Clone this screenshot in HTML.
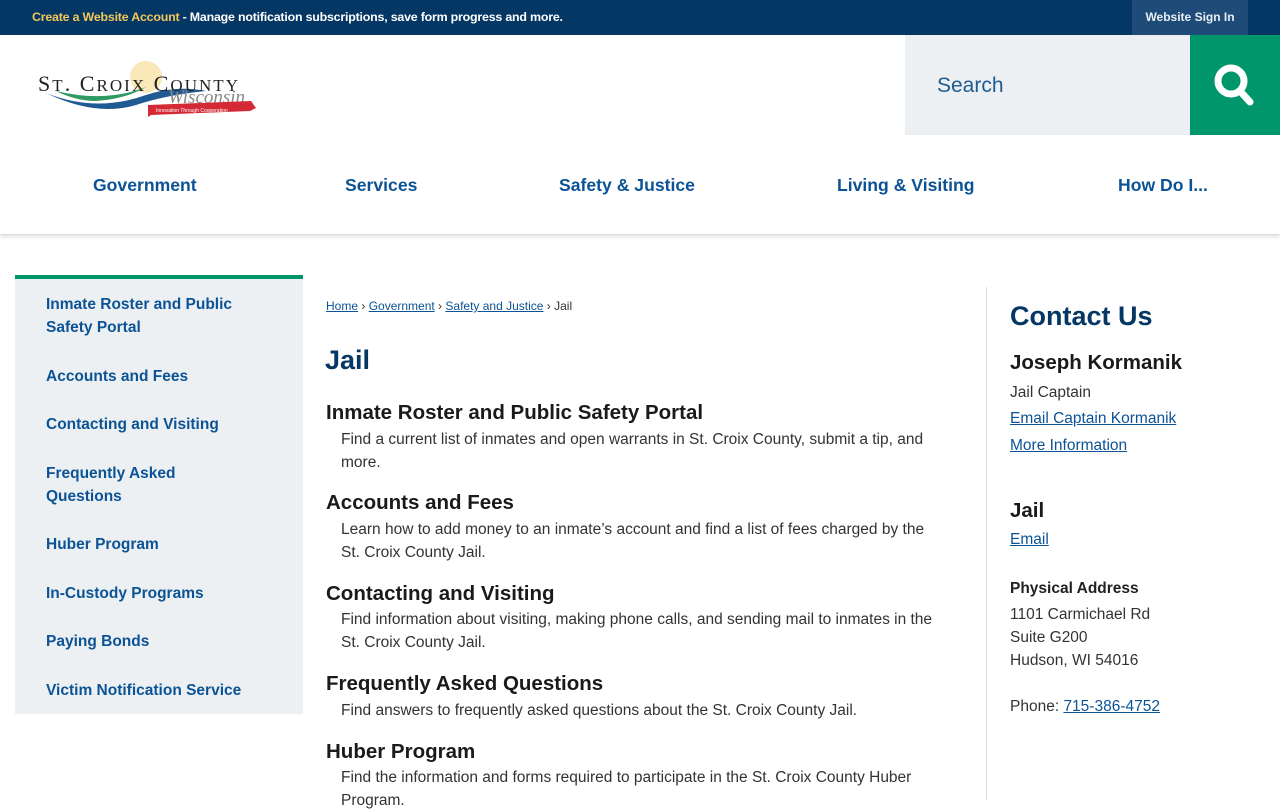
<!DOCTYPE html>
<html><head><meta charset="utf-8"><style>
*{box-sizing:border-box;margin:0;padding:0}
body{width:1280px;height:800px;overflow:hidden;font-family:"Liberation Sans",sans-serif;background:#fff;color:#222;position:relative}
.top{position:absolute;left:0;top:0;width:1280px;height:35px;background:#053764}
.top .msg{position:absolute;left:32px;top:10px;font-size:12.4px;color:#fff;font-weight:bold;letter-spacing:-0.2px}
.top .msg b{color:#f2c75c}
.top .sign{position:absolute;left:1132px;top:0;width:116px;height:35px;background:#1f4b78;color:#e8eef5;font-size:12px;font-weight:bold;text-align:center;line-height:35px}
.search{position:absolute;left:905px;top:35px;width:285px;height:100px;background:#ecf0f3}
.search span{position:absolute;left:32px;top:39px;font-size:21px;color:#1f5a92}
.sbtn{position:absolute;left:1190px;top:35px;width:90px;height:100px;background:#00966b}
.nav{position:absolute;top:175px;font-size:17.6px;font-weight:bold;color:#0c5395}
.navbar{position:absolute;left:0;top:135px;width:1280px;height:100px;border-bottom:1px solid #ddd;box-shadow:0 2px 4px rgba(0,0,0,.12)}
.side{position:absolute;left:15px;top:275px;width:288px;height:439px;background:#ecf0f3;border-top:4px solid #00966b}
.side a{position:absolute;left:31px;font-size:15.5px;font-weight:bold;color:#0c5395;line-height:23px;text-decoration:none}
.crumb{position:absolute;left:326px;top:299px;font-size:12px;color:#333}
.crumb u{color:#0c5395}
h1{position:absolute;left:325px;top:345px;font-size:27px;color:#053764}
.h{position:absolute;left:326px;font-size:20.5px;font-weight:bold;color:#1a1a1a}
.p{position:absolute;left:341px;width:640px;font-size:15.5px;color:#333;line-height:23px}
.vline{position:absolute;left:986px;top:287px;width:1px;height:513px;background:#ddd}
.r{position:absolute;left:1010px;font-size:15.5px;color:#333}
.r u{color:#0c5395}
</style></head><body>
<div class="top"><div class="msg"><b>Create a Website Account</b> - Manage notification subscriptions, save form progress and more.</div><div class="sign">Website Sign In</div></div>
<svg style="position:absolute;left:36px;top:55px" width="225" height="65" viewBox="0 0 225 65">
<circle cx="110" cy="22" r="16" fill="#f7d98a" opacity=".6"/>
<path d="M10 38 Q60 58 110 40 Q140 30 170 36 Q130 40 100 50 Q60 62 10 38Z" fill="#1f5a92"/>
<path d="M20 36 Q70 48 110 32 Q90 44 60 46 Q40 46 20 36Z" fill="#2e9b63"/>
<text x="2" y="36" font-family="Liberation Serif,serif" font-size="22" fill="#222" textLength="200">S<tspan font-size="17">T</tspan>. C<tspan font-size="17">ROIX</tspan> C<tspan font-size="17">OUNTY</tspan></text>
<text x="132" y="48" font-family="Liberation Serif,serif" font-style="italic" font-size="19" fill="#888">Wisconsin</text>
<path d="M112 50 L215 46 L220 53 L214 56 L115 60 L112 62Z" fill="#d42a35"/>
<text x="120" y="57" font-size="5" fill="#fff">Innovation Through Cooperation</text>
</svg>
<div class="search"><span>Search</span></div>
<div class="sbtn"><svg width="90" height="100"><circle cx="41" cy="46" r="13" fill="none" stroke="#fff" stroke-width="7"/><line x1="50" y1="56" x2="60" y2="67" stroke="#fff" stroke-width="7" stroke-linecap="round"/></svg></div>
<div class="navbar"></div>
<div class="nav" style="left:93px">Government</div>
<div class="nav" style="left:345px">Services</div>
<div class="nav" style="left:559px">Safety &amp; Justice</div>
<div class="nav" style="left:837px">Living &amp; Visiting</div>
<div class="nav" style="left:1118px">How Do I...</div>
<div class="side">
<a style="top:14px">Inmate Roster and Public<br>Safety Portal</a>
<a style="top:86px">Accounts and Fees</a>
<a style="top:134px">Contacting and Visiting</a>
<a style="top:183px">Frequently Asked<br>Questions</a>
<a style="top:254px">Huber Program</a>
<a style="top:303px">In-Custody Programs</a>
<a style="top:351px">Paying Bonds</a>
<a style="top:400px">Victim Notification Service</a>
</div>
<div class="crumb"><u>Home</u> › <u>Government</u> › <u>Safety and Justice</u> › Jail</div>
<h1>Jail</h1>
<div class="h" style="top:401px">Inmate Roster and Public Safety Portal</div>
<div class="p" style="top:428px">Find a current list of inmates and open warrants in St. Croix County, submit a tip, and<br>more.</div>
<div class="h" style="top:491px">Accounts and Fees</div>
<div class="p" style="top:518px">Learn how to add money to an inmate’s account and find a list of fees charged by the<br>St. Croix County Jail.</div>
<div class="h" style="top:582px">Contacting and Visiting</div>
<div class="p" style="top:608px">Find information about visiting, making phone calls, and sending mail to inmates in the<br>St. Croix County Jail.</div>
<div class="h" style="top:672px">Frequently Asked Questions</div>
<div class="p" style="top:699px">Find answers to frequently asked questions about the St. Croix County Jail.</div>
<div class="h" style="top:740px">Huber Program</div>
<div class="p" style="top:766px">Find the information and forms required to participate in the St. Croix County Huber<br>Program.</div>
<div class="vline"></div>
<div class="r" style="top:301px;font-size:27px;font-weight:bold;color:#053764">Contact Us</div>
<div class="r" style="top:351px;font-size:20.5px;font-weight:bold;color:#1a1a1a">Joseph Kormanik</div>
<div class="r" style="top:384px">Jail Captain</div>
<div class="r" style="top:410px"><u>Email Captain Kormanik</u></div>
<div class="r" style="top:437px"><u>More Information</u></div>
<div class="r" style="top:499px;font-size:20.5px;font-weight:bold;color:#1a1a1a">Jail</div>
<div class="r" style="top:531px"><u>Email</u></div>
<div class="r" style="top:580px;font-weight:bold;color:#222">Physical Address</div>
<div class="r" style="top:603px;line-height:23px">1101 Carmichael Rd<br>Suite G200<br>Hudson, WI 54016</div>
<div class="r" style="top:698px">Phone: <u>715-386-4752</u></div>
</body></html>
